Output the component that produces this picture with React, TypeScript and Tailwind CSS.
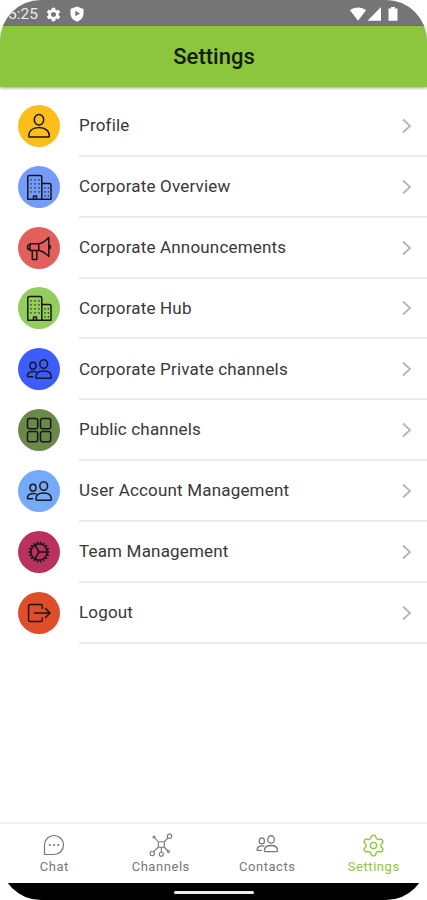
import type { ReactNode } from 'react';
import { Settings } from 'lucide-react';
import { IoCogOutline } from 'react-icons/io5';
import { MdSettings } from 'react-icons/md';

interface IconProps {
  children: ReactNode;
}

function RowIcon({ children }: IconProps) {
  return (
    <svg
      viewBox="0 0 42 42"
      className="size-[42px]"
      fill="none"
      stroke="currentColor"
      strokeWidth="1.5"
      strokeLinejoin="round"
      strokeLinecap="round"
    >
      {children}
    </svg>
  );
}

function ProfileIcon() {
  return (
    <RowIcon>
      <ellipse cx="21" cy="14.7" rx="4.7" ry="5.3" />
      <path d="M10.8 31.2c0-5.3 4-8.7 10.2-8.7s10.4 3.4 10.4 8.7c0 .6-.4.9-.9.9H11.7c-.5 0-.9-.3-.9-.9Z" />
    </RowIcon>
  );
}

function BuildingIcon() {
  return (
    <RowIcon>
      <path d="M9.8 33.2V11q0-1.5 1.5-1.5h11q1.5 0 1.5 1.5v22.2M23.8 17.5h7.7q1.5 0 1.5 1.5v14.2H9.8M15.5 33v-3h3v3" />
      <path d="M13 13.5v16M17 13.5v13M21 13.5v16M27 21.5v9M30.3 21.5v9" strokeWidth="1.2" strokeDasharray="0.6 3.4" />
    </RowIcon>
  );
}

function MegaphoneIcon() {
  return (
    <RowIcon>
      <path d="M12 16.7h8.8v6.8H12zM20.8 16.7c4-.7 7-2.8 10-6.2v19c-3-3.3-6-5.3-10-6M14.3 23.5v9h4.5v-9M31 18.2c2 .4 2 3.4 0 3.8" />
      <path d="M12 17.5c-3.3.3-3.3 5 0 5.3" />
    </RowIcon>
  );
}

function PeopleShapes() {
  return (
    <>
      <ellipse cx="15" cy="17.7" rx="3" ry="3.4" />
      <ellipse cx="25.7" cy="16" rx="3.9" ry="4.3" />
      <path d="M17.9 29.3c0-4 3.2-6.2 7.8-6.2s7.7 2.2 7.7 6.2q0 .9-.9.9H18.8q-.9 0-.9-.9ZM18 23.9c-4.7-1.5-8.6.7-8.6 4.1q0 .7.7.7h4.6" />
    </>
  );
}

function PeopleIcon() {
  return (
    <RowIcon>
      <PeopleShapes />
    </RowIcon>
  );
}

function GridIcon() {
  return (
    <RowIcon>
      <rect x="9.5" y="9.5" width="10.2" height="10.2" rx="2" />
      <rect x="22.5" y="9.5" width="10.2" height="10.2" rx="2" />
      <rect x="9.5" y="22.6" width="10.2" height="10.2" rx="2" />
      <rect x="22.5" y="22.6" width="10.2" height="10.2" rx="2" />
    </RowIcon>
  );
}

function LogoutIcon() {
  return (
    <RowIcon>
      <path d="M24.3 16.3v-2q0-1.7-1.7-1.7H12.3q-1.7 0-1.7 1.7v13.600q0 1.700 1.700 1.700h10.300q1.700 0 1.700-1.700v-2M16.500 21H31.500M27.500 16.500l4.500 4.500-4.500 4.500" />
    </RowIcon>
  );
}

function ChatIcon() {
  return (
    <svg viewBox="0 0 24 24" className="size-6" fill="none" stroke="currentColor" strokeWidth="1.2">
      <path d="M2.500 21.500V12A9.500 9.500 0 1 1 12 21.500Z" strokeLinejoin="round" />
      <path d="M7.800 12h.01M12 12h.01M16.200 12h.01" strokeWidth="2.200" strokeLinecap="round" />
    </svg>
  );
}

function ChannelsIcon() {
  return (
    <svg viewBox="0 0 24 24" className="size-6" fill="none" stroke="currentColor" strokeWidth="1.1">
      <rect x="9.3" y="8.8" width="6" height="5.4" rx="1" />
      <path d="m9.5 9-4-4.5M15 9l4-4.2M9.5 14l-5 4.8M15 14l4 4M12.3 14.2v5" />
      <circle cx="20.5" cy="3.3" r="2.2" />
      <circle cx="3.3" cy="20.5" r="2.2" />
      <circle cx="12.3" cy="21.2" r="2" />
      <circle cx="5" cy="4" r="1" />
      <circle cx="19.5" cy="18.5" r="1" />
    </svg>
  );
}

function ContactsIcon() {
  return (
    <svg viewBox="7 8.5 28 28" className="size-6" fill="none" stroke="currentColor" strokeWidth="1.5">
      <PeopleShapes />
    </svg>
  );
}

const ITEMS = [
  { label: 'Profile', color: 'bg-[#fdbd1b]', icon: <ProfileIcon /> },
  { label: 'Corporate Overview', color: 'bg-[#759bfb]', icon: <BuildingIcon /> },
  { label: 'Corporate Announcements', color: 'bg-[#e25f5c]', icon: <MegaphoneIcon /> },
  { label: 'Corporate Hub', color: 'bg-[#92cd5e]', icon: <BuildingIcon /> },
  { label: 'Corporate Private channels', color: 'bg-[#3c5dfc]', icon: <PeopleIcon /> },
  { label: 'Public channels', color: 'bg-[#69884a]', icon: <GridIcon /> },
  { label: 'User Account Management', color: 'bg-[#75a9fb]', icon: <PeopleIcon /> },
  { label: 'Team Management', color: 'bg-[#b9325f]', icon: <IoCogOutline className="size-[26px]" /> },
  { label: 'Logout', color: 'bg-[#e04d2b]', icon: <LogoutIcon /> },
];

const TABS = [
  { label: 'Chat', icon: <ChatIcon /> },
  { label: 'Channels', icon: <ChannelsIcon /> },
  { label: 'Contacts', icon: <ContactsIcon /> },
  { label: 'Settings', icon: <Settings className="size-[25px] -mb-px" strokeWidth={1.3} />, active: true },
];

function StatusBar() {
  return (
    <div className="flex h-[26px] shrink-0 items-center justify-between bg-[#757575] pt-0.5 pr-7 pl-2 text-white">
      <div className="flex items-center">
        <span className="w-[31px] pt-0.5 text-[15.5px] text-[#ececec]">5:25</span>
        <MdSettings className="ml-[6px] size-[17px]" />
        <svg viewBox="0 0 16 16" className="ml-[7px] size-4">
          <path d="M8 .5 14.5 3v4.5c0 3.8-2.5 6.5-6.5 8.3C4 14 1.5 11.3 1.5 7.5V3Z" fill="currentColor" />
          <path d="M6.3 4.8v5.4L11 7.5Z" fill="#757575" />
        </svg>
      </div>
      <svg viewBox="0 0 50 16" className="h-4 w-[50px]" fill="currentColor">
        <path d="M1 4.3C5.5.5 12.5.5 17 4.3L9 14.8Z" />
        <path d="M32 1v13.8H18.5Z" />
        <path d="M39.5 2.5H42V1h4v1.5h2.5V14.8h-9Z" />
      </svg>
    </div>
  );
}

export default function App() {
  return (
    <div className="flex h-[900px] w-full flex-col overflow-hidden rounded-[41px] bg-white font-[Roboto,sans-serif]">
      <StatusBar />

      <header className="flex h-[61px] shrink-0 items-center justify-center bg-[#8cc63f] pl-px shadow-[0_1px_3px_rgba(0,0,0,0.4)]">
        <h1 className="text-[22px] font-medium text-[#141c0c]">Settings</h1>
      </header>

      <main className="flex-1 pt-[9px]">
        {ITEMS.map((item) => (
          <div key={item.label} className="flex h-[60.85px] items-center pl-[18px]">
            <div className={`-mt-px flex size-[42px] items-center justify-center rounded-full text-[#171717] ${item.color}`}>
              {item.icon}
            </div>
            <div className="ml-[19px] flex h-full flex-1 items-center justify-between border-b-2 border-[#ececec] pt-px pr-[14px]">
              <span className="text-[17px] tracking-[0.18px] text-[#383838]">{item.label}</span>
              <svg viewBox="0 0 12 16" className="h-4 w-3" fill="none" stroke="#b5b5b5" strokeWidth="1.8">
                <path d="m2 1.5 7 6.5-7 6.5" />
              </svg>
            </div>
          </div>
        ))}
      </main>

      <nav className="flex h-[61px] shrink-0 border-t-2 border-[#f2f2f2] pt-[9px] pl-px">
        {TABS.map((tab) => (
          <div
            key={tab.label}
            className={`flex flex-1 flex-col items-center ${tab.active ? 'text-[#8cc63f]' : 'text-[#777]'}`}
          >
            {tab.icon}
            <span className="mt-px text-[13px] leading-[18px] tracking-[0.55px]">{tab.label}</span>
          </div>
        ))}
      </nav>

      <div className="flex h-[17px] shrink-0 justify-center bg-black pt-2">
        <div className="h-[3px] w-[80px] rounded-full bg-[#ededed]" />
      </div>
    </div>
  );
}
